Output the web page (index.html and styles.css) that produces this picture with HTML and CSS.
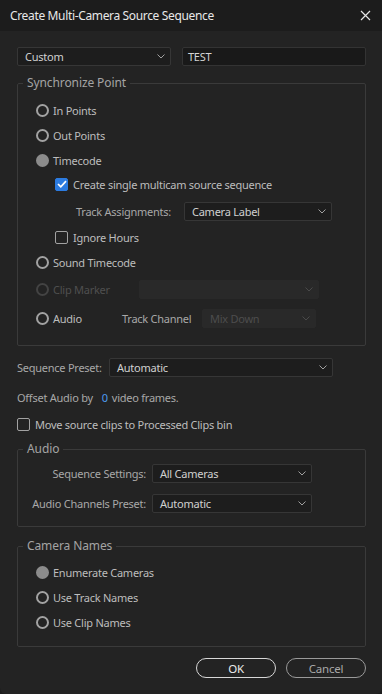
FILE: index.html
```html
<!doctype html>
<html lang="en">
	<head>
		<meta charset="UTF-8">
		<title>Create Multi-Camera Source Sequence</title>
		<link rel="stylesheet" href="styles.css">
	</head>
	<body>
		<div class="dialog">
			<div class="titlebar">
				<span class="title">Create Multi-Camera Source Sequence</span>
				<svg class="close" width="11" height="11" viewBox="0 0 11 11"><path d="M1 1L10 10M10 1L1 10" stroke="#e6e6e6" stroke-width="1.2" fill="none"/></svg>
			</div>
			<div class="content">
				<div class="top-row">
					<div class="select select-custom"><span>Custom</span><svg class="chev" width="8" height="5" viewBox="0 0 8 5"><path d="M0.5 0.5L4 4L7.5 0.5" stroke="#a0a0a0" fill="none"/></svg></div>
					<div class="field">TEST</div>
				</div>

				<fieldset class="group group-sync">
					<legend>Synchronize Point</legend>
					<div class="group-body">
						<div class="row"><span class="radio"></span><span class="opt">In Points</span></div>
						<div class="row"><span class="radio"></span><span class="opt">Out Points</span></div>
						<div class="row"><span class="radio radio-on"></span><span class="opt">Timecode</span></div>
						<div class="row row-sub tight"><span class="check check-on"><svg width="10" height="8" viewBox="0 0 10 8"><path d="M1 4L3.8 6.8L9 1.2" stroke="#fff" stroke-width="1.7" fill="none"/></svg></span><span class="opt">Create single multicam source sequence</span></div>
						<div class="row row-drop row-track loose">
							<span class="lbl lbl-track">Track Assignments:</span>
							<div class="select select-track"><span>Camera Label</span><svg class="chev" width="8" height="5" viewBox="0 0 8 5"><path d="M0.5 0.5L4 4L7.5 0.5" stroke="#a0a0a0" fill="none"/></svg></div>
						</div>
						<div class="row row-sub"><span class="check"></span><span class="opt">Ignore Hours</span></div>
						<div class="row"><span class="radio"></span><span class="opt">Sound Timecode</span></div>
						<div class="row row-drop loose">
							<span class="radio radio-off"></span><span class="opt opt-clip off">Clip Marker</span>
							<div class="select select-off select-clip"><span></span><svg class="chev" width="8" height="5" viewBox="0 0 8 5"><path d="M0.5 0.5L4 4L7.5 0.5" stroke="#4a4a4a" fill="none"/></svg></div>
						</div>
						<div class="row row-drop looser">
							<span class="radio"></span><span class="opt opt-audio">Audio</span>
							<span class="lbl off lbl-channel">Track Channel</span>
							<div class="select select-off select-channel"><span>Mix Down</span><svg class="chev" width="8" height="5" viewBox="0 0 8 5"><path d="M0.5 0.5L4 4L7.5 0.5" stroke="#4a4a4a" fill="none"/></svg></div>
						</div>
					</div>
				</fieldset>

				<div class="row row-drop row-preset">
					<span class="lbl lbl-preset">Sequence Preset:</span>
					<div class="select select-preset"><span>Automatic</span><svg class="chev" width="8" height="5" viewBox="0 0 8 5"><path d="M0.5 0.5L4 4L7.5 0.5" stroke="#a0a0a0" fill="none"/></svg></div>
				</div>
				<div class="row row-offset">
					<span class="lbl">Offset Audio by</span><span class="scrub">0</span><span class="lbl">video frames.</span>
				</div>
				<div class="row row-move">
					<span class="check"></span><span class="opt">Move source clips to Processed Clips bin</span>
				</div>

				<fieldset class="group group-audio">
					<legend>Audio</legend>
					<div class="group-body">
						<div class="row row-drop">
							<span class="lbl lbl-audio">Sequence Settings:</span>
							<div class="select select-audio"><span>All Cameras</span><svg class="chev" width="8" height="5" viewBox="0 0 8 5"><path d="M0.5 0.5L4 4L7.5 0.5" stroke="#a0a0a0" fill="none"/></svg></div>
						</div>
						<div class="row row-drop">
							<span class="lbl lbl-audio">Audio Channels Preset:</span>
							<div class="select select-audio"><span>Automatic</span><svg class="chev" width="8" height="5" viewBox="0 0 8 5"><path d="M0.5 0.5L4 4L7.5 0.5" stroke="#a0a0a0" fill="none"/></svg></div>
						</div>
					</div>
				</fieldset>

				<fieldset class="group group-names">
					<legend>Camera Names</legend>
					<div class="group-body">
						<div class="row"><span class="radio radio-on"></span><span class="opt">Enumerate Cameras</span></div>
						<div class="row"><span class="radio"></span><span class="opt">Use Track Names</span></div>
						<div class="row"><span class="radio"></span><span class="opt">Use Clip Names</span></div>
					</div>
				</fieldset>

				<div class="buttons">
					<div class="btn btn-ok">OK</div>
					<div class="btn btn-cancel">Cancel</div>
				</div>
			</div>
		</div>
	</body>
</html>
```

FILE: styles.css
```css
html, body {
	margin: 0;
	padding: 0;
	background: #1c1c1c;
}
* {
	box-sizing: border-box;
}
.dialog {
	width: 382px;
	height: 694px;
	background: #232323;
	font-family: "Noto Sans", "Open Sans", sans-serif;
	font-size: 11px;
	letter-spacing: -0.25px;
	color: #c4c4c4;
	display: flex;
	flex-direction: column;
	border-radius: 0 0 6px 6px;
	overflow: hidden;
}
.titlebar {
	height: 31px;
	flex: none;
	background: #1c1c1c;
	display: flex;
	align-items: center;
	justify-content: space-between;
	padding: 0 11px 0 10px;
}
.title {
	font-size: 12px;
	color: #e8e8e8;
	letter-spacing: -0.35px;
}
.content {
	padding: 16px 16px 0 17px;
}
.top-row {
	display: flex;
	gap: 11px;
	height: 19px;
}
.select {
	height: 19px;
	background: #1d1d1d;
	border: 1px solid #363636;
	border-radius: 2px;
	display: flex;
	align-items: center;
	justify-content: space-between;
	padding: 0 5px 0 7px;
	color: #d0d0d0;
	flex: none;
}
.chev {
	flex: none;
}
.select-custom {
	width: 154px;
}
.field {
	flex: 1;
	height: 19px;
	background: #191919;
	border: 1px solid #333;
	border-radius: 2px;
	padding: 0 5px;
	display: flex;
	align-items: center;
	color: #d4d4d4;
}
.group {
	margin: 10px 0 0;
	padding: 0;
	border: 1px solid #3a3a3a;
	border-radius: 2px;
	min-width: 0;
}
.group legend {
	margin-left: 5px;
	padding: 0 4px;
	font-size: 12px;
	letter-spacing: -0.1px;
	line-height: 14px;
	color: #a4a4a4;
}
.group-body {
	display: flex;
	flex-direction: column;
	gap: 5px;
	padding: 10px 18px 16px;
}
.row {
	height: 20px;
	display: flex;
	align-items: center;
}
.row-drop {
	height: 22px;
}
.tight {
	margin-top: -1px;
}
.loose {
	margin-top: 1px;
}
.looser {
	margin-top: 2px;
}
.radio {
	width: 13px;
	height: 13px;
	border: 2px solid #a2a2a2;
	border-radius: 50%;
	flex: none;
	margin-right: 4px;
}
.radio-on {
	border-color: #8c8c8c;
	background: #8c8c8c;
}
.radio-off {
	border-color: #434343;
}
.opt {
	color: #bdbdbd;
}
.off {
	color: #4f4f4f;
}
.row-sub {
	margin-left: 19px;
}
.check {
	width: 13px;
	height: 13px;
	border: 1.5px solid #a2a2a2;
	border-radius: 2px;
	flex: none;
	margin-right: 5px;
	display: flex;
	align-items: center;
	justify-content: center;
}
.check-on {
	background: #2c7be0;
	border-color: #2c7be0;
}
.lbl {
	color: #a8a8a8;
}
.lbl-track {
	width: 108px;
	margin-left: 40px;
}
.select-track {
	width: 148px;
}
.opt-clip {
	width: 86px;
}
.select-off {
	background: #292929;
	border-color: #292929;
	color: #4d4d4d;
}
.select-clip {
	width: 180px;
}
.opt-audio {
	width: 69px;
}
.lbl-channel {
	width: 80px;
}
.select-channel {
	width: 114px;
}
.row-preset {
	margin-top: 10px;
}
.lbl-preset {
	width: 92px;
}
.select-preset {
	width: 224px;
}
.row-offset {
	margin-top: 9px;
}
.scrub {
	color: #4d9bf0;
	margin: 0 4px 0 9px;
}
.row-move {
	margin-top: 7px;
}
.group-audio {
	margin-top: 8px;
}
.group-audio .group-body {
	padding: 6px 0 12px;
	gap: 8px;
}
.lbl-audio {
	width: 128px;
	text-align: right;
	margin-right: 6px;
}
.select-audio {
	width: 160px;
}
.group-names {
	margin-top: 12px;
}
.group-names .group-body {
	padding: 9px 18px 14px;
}
.buttons {
	display: flex;
	justify-content: flex-end;
	gap: 10px;
	margin-top: 11px;
}
.btn {
	width: 80px;
	height: 20px;
	border-radius: 10px;
	display: flex;
	align-items: center;
	justify-content: center;
	font-size: 11.5px;
}
.btn-ok {
	border: 1.5px solid #d8d8d8;
	color: #ececec;
}
.btn-cancel {
	border: 1.5px solid #9a9a9a;
	color: #a8a8a8;
}
```
